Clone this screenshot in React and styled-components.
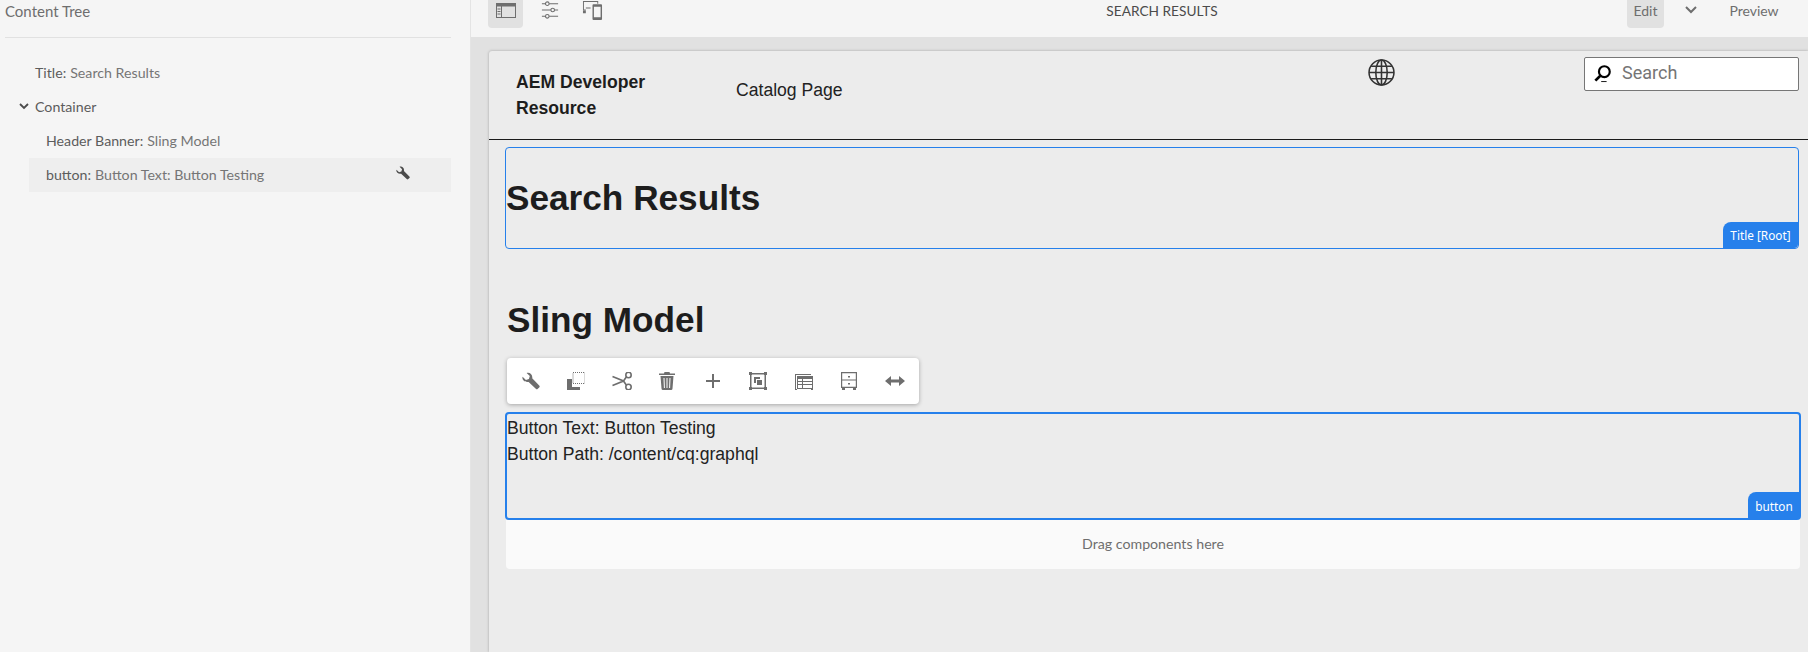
import React from 'react';
import styled, { createGlobalStyle } from 'styled-components';

const Global = createGlobalStyle`
  html, body { margin: 0; padding: 0; background: #e1e1e1; }
  * { box-sizing: border-box; }
`;
const UI = '"Lato", "Noto Sans", sans-serif';
const ARIAL = '"Liberation Sans", Arial, sans-serif';

const Shell = styled.div`
  display: grid; grid-template-columns: 471px 1fr; width: 1808px; height: 652px; overflow: hidden;
`;
const Side = styled.aside`
  background: #f5f5f5; border-right: 1px solid #e4e4e4; padding: 0 19px 0 5px; font-family: ${UI};
`;
const SideTitle = styled.div`
  height: 38px; line-height: 22px; font-size: 15px; color: #6e6e6e; border-bottom: 1px solid #e1e1e1;
`;
const Tree = styled.ul`
  list-style: none; margin: 18px 0 0; padding: 0;
`;
const Row = styled.li`
  position: relative; display: flex; align-items: center; height: 34px; font-size: 14.2px; color: #5c5c5c;
  margin-left: 24px; padding: 0 0 2px ${p => p.$indent}px;
  background: ${p => p.$active ? '#eeeeee' : 'transparent'};
`;
const Value = styled.span`
  color: #757575; margin-left: 4px;
`;
const Caret = styled.svg`
  position: absolute; left: -10px; top: 11px; width: 10px; height: 10px;
`;
const RowTool = styled.svg`
  position: absolute; left: 367px; top: 8px; width: 14px; height: 14px; fill: #4b4b4b;
`;
const Main = styled.main`
  display: flex; flex-direction: column; min-width: 0;
`;
const TopBar = styled.header`
  position: relative; flex: none; display: flex; align-items: flex-start; height: 37px; background: #f5f5f5; font-family: ${UI}; color: #6e6e6e; padding-left: 17px;
`;
const ToolButton = styled.div`
  display: flex; align-items: center; justify-content: center; width: ${p => p.$w || 35}px; height: 28px; margin-right: ${p => p.$gap || 0}px;
  border-radius: 0 0 4px 4px; background: ${p => p.$on ? '#e1e1e1' : 'transparent'};
  padding-bottom: 8px;
  svg { display: block; fill: #6e6e6e; }
`;
const PageName = styled.div`
  position: absolute; left: 553px; width: 276px; top: 0; text-align: center; line-height: 22px; font-size: 13.7px; color: #4b4b4b;
`;
const Modes = styled.div`
  margin-left: auto; display: flex; align-items: flex-start; padding-right: 29px; font-size: 14px;
`;
const Mode = styled.div`
  display: flex; justify-content: center; height: 28px; line-height: 22px; width: ${p => p.$w}px; margin-left: ${p => p.$ml || 0}px;
  border-radius: 0 0 4px 4px; background: ${p => p.$on ? '#e1e1e1' : 'transparent'};
  svg { margin-top: 5px; }
`;
const Card = styled.div`
  flex: 1; margin: 14px 0 0 18px; background: #ececec; border-radius: 3px 0 0 0; box-shadow: 0 0 3px rgba(0,0,0,.28); font-family: ${ARIAL}; color: #1d1d1d; padding-bottom: 1px;
`;
const SiteHeader = styled.div`
  position: relative; display: flex; height: 89px; border-bottom: 1px solid #1b1b1b;
`;
const Brand = styled.div`
  width: 247px; padding: 18px 0 0 27px; font-size: 17.6px; font-weight: 700; line-height: 26px;
`;
const NavLink = styled.div`
  padding-top: 27px; font-size: 17.6px; line-height: 24px; color: #222;
`;
const Globe = styled.svg`
  position: absolute; left: 879px; top: 8px; width: 27px; height: 27px;
`;
const SearchBox = styled.div`
  position: absolute; left: 1095px; top: 6px; width: 215px; height: 34px; background: #fff; border: 1px solid #767676; border-radius: 2px;
  display: flex; align-items: center; padding: 0 0 3px 9px; font-size: 18px; color: #757575; font-family: "Roboto", sans-serif;
  svg { margin-right: 10px; }
`;
const Editable = styled.section`
  position: relative; margin: ${p => p.$mt}px ${p => p.$mr}px 0 ${p => p.$ml}px; height: ${p => p.$h}px;
  border: ${p => p.$thick ? 2 : 1}px solid #2680eb; border-radius: 4px;
`;
const Badge = styled.div`
  position: absolute; right: ${p => p.$off}px; bottom: ${p => p.$off}px; height: ${p => p.$h}px; width: ${p => p.$w}px; display: flex; align-items: center; justify-content: center;
  background: #2680eb; color: #fff; font: 11.8px "Noto Sans", sans-serif; border-radius: 8px 0 4px 0;
`;
const TitleText = styled.h1`
  margin: 30px 0 0 0; font-size: 35.2px; line-height: 40px; font-weight: 700; color: #1d1d1d;
`;
const Heading = styled.h2`
  margin: 51px 0 0 18px; font-size: 35.2px; line-height: 40px; font-weight: 700; color: #1d1d1d;
`;
const EditBar = styled.div`
  display: flex; align-items: center; width: 412px; height: 46px; margin: 18px 0 0 18px; padding-left: 1px; background: #fff; border-radius: 4px;
  box-shadow: 0 1px 4px rgba(0,0,0,.3);
`;
const EditTool = styled.div`
  display: flex; justify-content: center; align-items: center; width: 45.5px; height: 100%;
  svg { display: block; fill: #6e6e6e; }
`;
const Line = styled.div`
  font-size: 17.6px; line-height: 26px; color: #222;
`;
const ButtonBody = styled.div`
  padding-top: 1px;
`;
const DropZone = styled.div`
  margin: 0 8px 0 17px; height: 49px; padding-bottom: 2px; background: #fafafa; border-radius: 0 0 4px 4px; display: flex; align-items: center; justify-content: center;
  font: 14.2px ${UI}; color: #6e6e6e;
`;

const Wrench = (p) => (
  <svg viewBox="0 0 18 18" width="18" height="18" {...p}>
    <path d="M.6 4.7 3.9 8l3-.9.9-3L4.6.9C7.4-.2 11 2.200 10.200 6.300L17.200 13.400a1.400 1.400 0 0 1 0 2l-1.400 1.400a1.400 1.400 0 0 1-2 0L6.600 9.900C3 10.800-.4 8 .6 4.700Z" />
  </svg>
);

export default function App() {
  return (
    <>
      <Global />
      <Shell>
        <Side>
          <SideTitle>Content Tree</SideTitle>
          <Tree>
            <Row $indent={6}>Title:<Value>Search Results</Value></Row>
            <Row $indent={6}>
              <Caret viewBox="0 0 10 10"><path d="M1 3 5 7 9 3" fill="none" stroke="#4b4b4b" strokeWidth="1.8" /></Caret>
              Container
            </Row>
            <Row $indent={17}>Header Banner:<Value>Sling Model</Value></Row>
            <Row $indent={17} $active>button:<Value>Button Text: Button Testing</Value>
              <RowTool viewBox="0 0 18 18"><path d="M.6 4.7 3.900 8l3-.9.9-3L4.600.9C7.400-.2 11 2.200 10.200 6.300L17.200 13.400a1.400 1.400 0 0 1 0 2l-1.400 1.400a1.400 1.400 0 0 1-2 0L6.600 9.900C3 10.800-.4 8 .6 4.700Z" /></RowTool>
            </Row>
          </Tree>
        </Side>
        <Main>
          <TopBar>
            <ToolButton $on $w={35} $gap={9}>
              <svg viewBox="0 0 20 15" width="20" height="15"><path fillRule="evenodd" d="M0 0h20v15H0ZM1 3.500V14h4V3.500Zm5 0V14h13V3.500Z" /><path d="M1.500 5.500h3v1h-3zM1.500 8h3v1h-3zM1.500 10.500h3v1h-3z" /></svg>
            </ToolButton>
            <ToolButton $w={35} $gap={15}>
              <svg viewBox="0 0 20 20" width="18" height="18"><g fill="none" stroke="#6e6e6e" strokeWidth="1.200"><path d="M1 3h4M9 3h10M1 10h10M15 10h4M1 17h4M9 17h10" /><circle cx="7" cy="3" r="2" /><circle cx="13" cy="10" r="2" /><circle cx="7" cy="17" r="2" /></g></svg>
            </ToolButton>
            <ToolButton $w={21}>
              <svg viewBox="0 0 22 21" width="21" height="20"><path fillRule="evenodd" d="M1 1h16v3h-1V2H2v8h2v1H1ZM12 4.500h8a1 1 0 0 1 1 1V20a1 1 0 0 1-1 1h-8a1 1 0 0 1-1-1V5.500a1 1 0 0 1 1-1ZM12.500 7v11h7V7Z" /><path d="M1 11h3v3H1zM4 8h5v1H4z" /></svg>
            </ToolButton>
            <PageName>SEARCH RESULTS</PageName>
            <Modes>
              <Mode $on $w={37}>Edit</Mode>
              <Mode $w={20} $ml={17}>
                <svg viewBox="0 0 12 10" width="12" height="10"><path d="M1 2 6 7 11 2" fill="none" stroke="#6e6e6e" strokeWidth="2" /></svg>
              </Mode>
              <Mode $w={50} $ml={28}>Preview</Mode>
            </Modes>
          </TopBar>
          <Card>
            <SiteHeader>
              <Brand>AEM Developer<br />Resource</Brand>
              <NavLink>Catalog Page</NavLink>
              <Globe viewBox="0 0 26 26">
                <g fill="none" stroke="#333" strokeWidth="1.500"><circle cx="13" cy="13" r="12" /><ellipse cx="13" cy="13" rx="5.500" ry="12" /><path d="M13 1v24M1 13h24M3 7h20M3 19h20" /></g>
              </Globe>
              <SearchBox>
                <svg viewBox="0 0 20 20" width="18" height="20">
                  <circle cx="11.500" cy="8.500" r="6" fill="none" stroke="#000" strokeWidth="2.400" />
                  <path d="M7 13 1.500 18.500" stroke="#000" strokeWidth="3" /><path d="M8 19.500h6" stroke="#000" strokeWidth="1" />
                </svg>
                Search
              </SearchBox>
            </SiteHeader>
            <Editable $mt={7} $mr={9} $ml={16} $h={102}>
              <TitleText>Search Results</TitleText>
              <Badge $off={0} $w={75} $h={26}>Title [Root]</Badge>
            </Editable>
            <Heading>Sling Model</Heading>
            <EditBar>
              <EditTool><Wrench /></EditTool>
              <EditTool>
                <svg viewBox="0 0 18 18" width="18" height="18"><path d="M0 7h5v8h8v3H0Z" /><path d="M6 .5h12v11H6Z" fill="none" stroke="#6e6e6e" strokeDasharray="1 1" /></svg>
              </EditTool>
              <EditTool>
                <svg viewBox="0 0 20 18" width="20" height="18"><g fill="none" stroke="#6e6e6e" strokeWidth="1.600"><circle cx="16.500" cy="3" r="2.700" /><circle cx="16.500" cy="15" r="2.700" /><path d="M.5 4.500 11.500 9 14.300 13M.5 13.500 11.500 9 14.300 5" /></g></svg>
              </EditTool>
              <EditTool>
                <svg viewBox="0 0 16 18" width="16" height="18"><path fillRule="evenodd" d="M5.500 0h5l.5 1.500h5V3H0V1.500h5ZM1.500 4h13l-1 12.500A1.500 1.500 0 0 1 12 18H4a1.500 1.500 0 0 1-1.500-1.500ZM4.500 6l.4 10h1L5.500 6Zm3 0v10h1V6Zm3 0-.4 10h1l.4-10Z" /></svg>
              </EditTool>
              <EditTool>
                <svg viewBox="0 0 14 14" width="14" height="14"><path d="M6 0h2v6h6v2H8v6H6V8H0V6h6Z" /></svg>
              </EditTool>
              <EditTool>
                <svg viewBox="0 0 18 18" width="18" height="18"><path fillRule="evenodd" d="M1 1h16v16H1ZM2.500 2.500v13h13v-13Z" /><path d="M0 0h3v3H0zM15 0h3v3h-3zM0 15h3v3H0zM15 15h3v3h-3z" /><path d="M5 5h6v2H7v4H5Z" /><path d="M8 8h5v5H8Z" /></svg>
              </EditTool>
              <EditTool>
                <svg viewBox="0 0 18 18" width="18" height="18"><path fillRule="evenodd" d="M0 2h16v1H1v14h15v1H0ZM2 4h16v14H2ZM3 7v2h4V7Zm5 0v2h9V7Zm-5 3v2h4v-2Zm5 0v2h9v-2Zm-5 3v3h4v-3Zm5 0v3h9v-3Z" /></svg>
              </EditTool>
              <EditTool>
                <svg viewBox="0 0 16 18" width="16" height="18"><path fillRule="evenodd" d="M0 0h16v16H0ZM1.200 1.200v6.200h13.600V1.200Zm0 7.400v6.200h13.600V8.600Z" /><path d="M7 4h2v1.500H7zM7 11h2v1.500H7zM1 16h3v2H1zM12 16h3v2h-3z" /></svg>
              </EditTool>
              <EditTool>
                <svg viewBox="0 0 20 12" width="20" height="12"><path d="M0 6 6 1v3.500h8V1l6 5-6 5V7.500H6V11Z" /></svg>
              </EditTool>
            </EditBar>
            <Editable $mt={8} $mr={7} $ml={16} $h={108} $thick>
              <ButtonBody>
                <Line>Button Text: Button Testing</Line>
                <Line>Button Path: /content/cq:graphql</Line>
              </ButtonBody>
              <Badge $off={-1} $w={52} $h={27}>button</Badge>
            </Editable>
            <DropZone>Drag components here</DropZone>
          </Card>
        </Main>
      </Shell>
    </>
  );
}
